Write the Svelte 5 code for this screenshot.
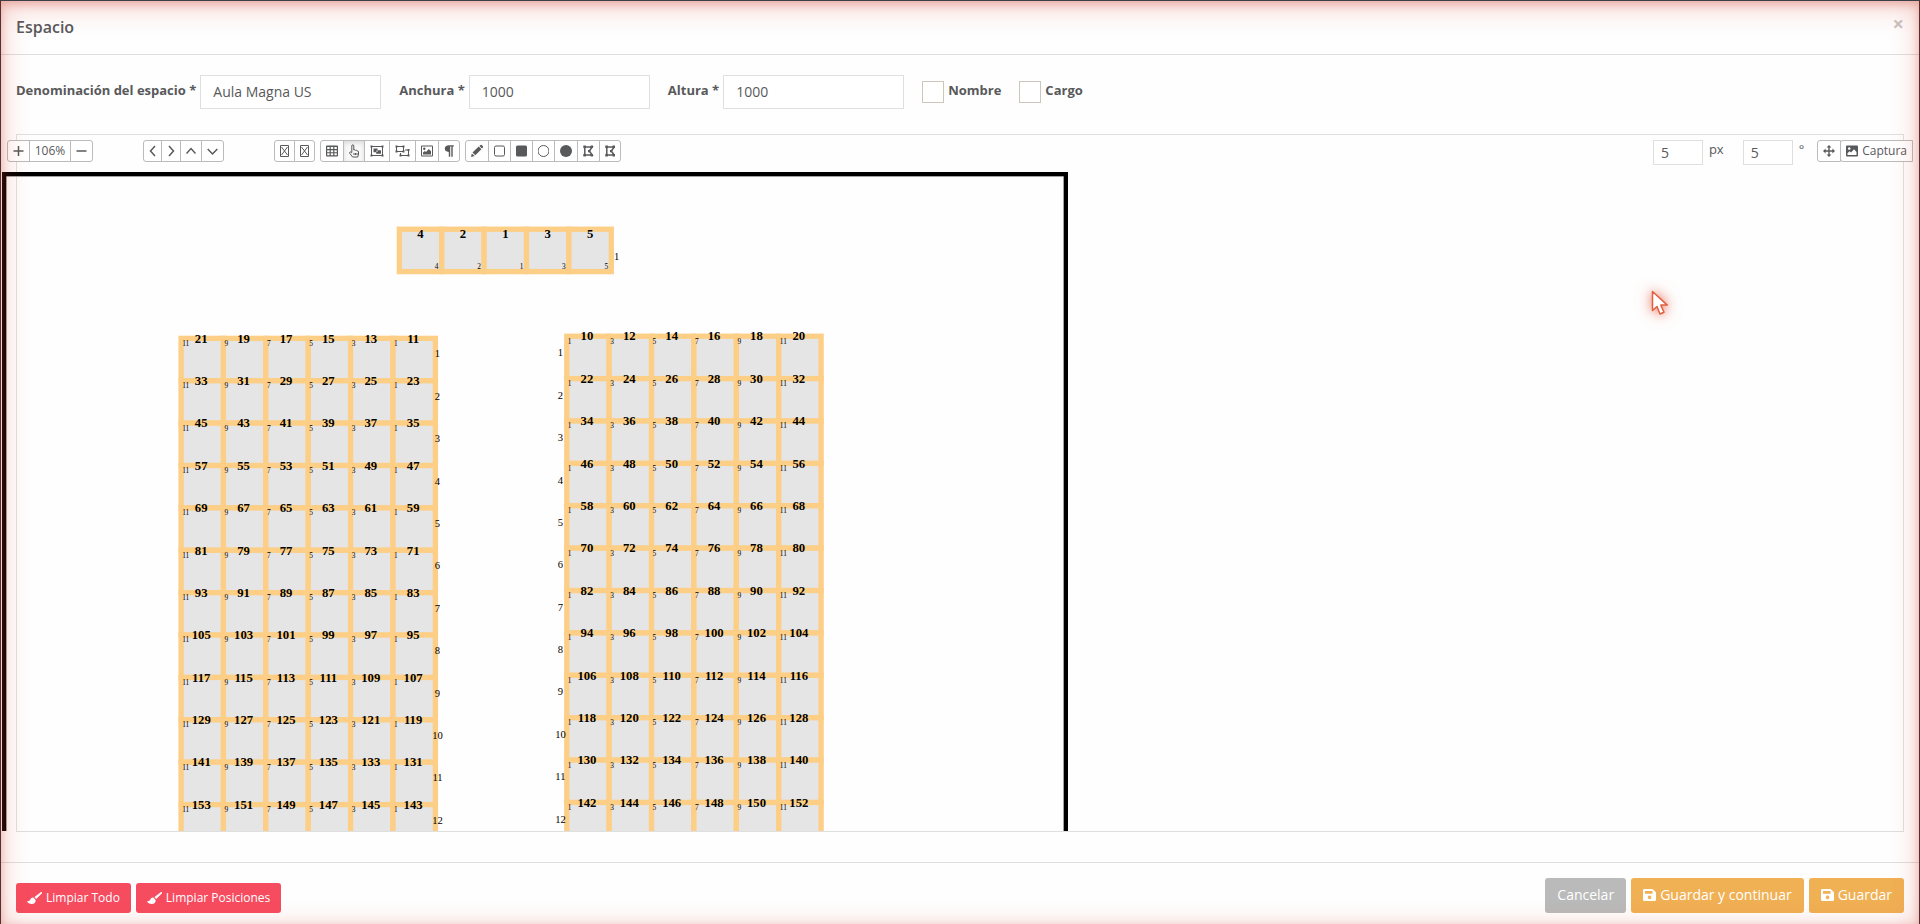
<script lang="ts">
  type Icon = { id: string; w: number; title: string };
  type Seat = { x: number; y: number; num: number; pos: number };

  let name = $state('Aula Magna US');
  let spaceWidth = $state(1000);
  let spaceHeight = $state(1000);
  let showName = $state(false);
  let showRole = $state(false);
  let stepPx = $state(5);
  let stepDeg = $state(5);
  let zoom = $state(106);
  let activeTool = $state('hand');

  const arrows: Icon[] = [
    { id: 'left', w: 7, title: 'Izquierda' },
    { id: 'right', w: 8, title: 'Derecha' },
    { id: 'up', w: 10, title: 'Arriba' },
    { id: 'down', w: 11, title: 'Abajo' },
  ];

  const missing: Icon[] = [
    { id: 'box1', w: 9, title: 'Deshacer' },
    { id: 'box2', w: 9, title: 'Rehacer' },
  ];

  const tools: Icon[] = [
    { id: 'table', w: 12, title: 'Tabla' },
    { id: 'hand', w: 10, title: 'Seleccionar' },
    { id: 'group', w: 14, title: 'Agrupar' },
    { id: 'ungroup', w: 15, title: 'Desagrupar' },
    { id: 'image', w: 12, title: 'Imagen' },
    { id: 'paragraph', w: 10, title: 'Texto' },
  ];

  const shapes: Icon[] = [
    { id: 'pencil', w: 12, title: 'Lápiz' },
    { id: 'square', w: 11, title: 'Rectángulo' },
    { id: 'squareFill', w: 11, title: 'Rectángulo relleno' },
    { id: 'circle', w: 11, title: 'Círculo' },
    { id: 'circleFill', w: 12, title: 'Círculo relleno' },
    { id: 'poly1', w: 11, title: 'Polígono' },
    { id: 'poly2', w: 10, title: 'Polígono relleno' },
  ];

  // seats are 40 x 40 units on the plan
  const SIZE = 40;
  const ROWS = 12;

  const presidency: Seat[] = [4, 2, 1, 3, 5].map((n, i) => ({
    x: 372 + i * SIZE,
    y: 51,
    num: n,
    pos: n,
  }));

  function block(x: number, y: number, first: number, step: number, firstPos: number): Seat[] {
    const seats: Seat[] = [];
    for (let r = 0; r < ROWS; r++) {
      for (let c = 0; c < 6; c++) {
        seats.push({
          x: x + c * SIZE,
          y: y + r * SIZE,
          num: first + c * step + r * 12,
          pos: firstPos + c * step,
        });
      }
    }
    return seats;
  }

  const leftSeats = block(166, 154, 21, -2, 11);
  const rightSeats = block(530, 152, 10, 2, 1);
  const rows = Array.from({ length: ROWS }, (_, i) => i);
</script>

{#snippet icon(id: string, w: number)}
  <svg class="icon" width={w} height="14" viewBox="0 0 {w} 14" aria-hidden="true">
    {#if id === 'plus'}
      <path class="line" d="M5.500 2v10M.5 7h10" />
    {:else if id === 'minus'}
      <path class="line" d="M.5 7h10" />
    {:else if id === 'left'}
      <path class="line" d="M6 2 1.500 7 6 12" />
    {:else if id === 'right'}
      <path class="line" d="M2 2l4.500 5L2 12" />
    {:else if id === 'up'}
      <path class="line" d="M.5 9.500 5 4.500l4.500 5" />
    {:else if id === 'down'}
      <path class="line" d="M.7 5l4.800 5 4.800-5" />
    {:else if id === 'box1' || id === 'box2'}
      <path class="thin" d="M.5 1.500h8v11h-8zM1.500 3l6 8M7.500 3l-6 8" />
    {:else if id === 'table'}
      <path fill-rule="evenodd" d="M1 1.500h10q1 0 1 1v9q0 1-1 1H1q-1 0-1-1v-9q0-1 1-1zM1.200 3v2h2.400V3zm3.600 0v2h2.400V3zm3.600 0v2h2.400V3zM1.200 6.200v2h2.400v-2zm3.600 0v2h2.400v-2zm3.600 0v2h2.400v-2zM1.200 9.300v2h2.400v-2zm3.600 0v2h2.400v-2zm3.600 0v2h2.400v-2z" />
    {:else if id === 'hand'}
      <path class="thin" d="M2.800 8.500V2q0-1.200 1-1.200T4.800 2v4q1.500-.8 1.800.4 1.500-.5 1.600.6 1.300-.2 1.300 1v2l-.7 3H3.600L.8 9.400Q.2 8.200 1.200 7.900q.8 0 1.600 1M5 9v2M6.500 9v2M8 9v2" />
    {:else if id === 'group'}
      <path class="thin" d="M1.500 2.500h11v9h-11z" />
      <path d="M.5 1.500h2v2h-2zM11.500 1.500h2v2h-2zM.5 10.500h2v2h-2zM11.500 10.500h2v2h-2zM3.500 4.500h4v1.700H11v3.600H6.200V8.200H3.500z" />
      <path d="M6.400 6.500h1.200v1.300H6.400z" fill="#fff" />
    {:else if id === 'ungroup'}
      <path class="thin" d="M1.500 2.500h7v5h-7zM10 6h3.500v5.500h-8V9" />
      <path d="M.5 1.500h2v2h-2zM7.500 1.500h2v2h-2zM.5 6.500h2v2h-2zM7.500 6.500h2v2h-2zM12.500 5h2v2h-2zM4.500 10.500h2v2h-2zM12.500 10.500h2v2h-2z" />
    {:else if id === 'image'}
      <path fill-rule="evenodd" d="M1 1.500h10q1 0 1 1v9q0 1-1 1H1q-1 0-1-1v-9q0-1 1-1zM1 2.600v8.800h10V2.600z" />
      <circle cx="3.300" cy="4.800" r="1.200" />
      <path d="M2 10.500v-2L3.800 7l1.200 1 2.800-3L10 7.300v3.200z" />
    {:else if id === 'paragraph'}
      <path d="M9.800 1.200v1.300H8.700v10.300H7.300V2.500H6.200v10.300H4.800V8Q.8 7.800.8 4.600T5 1.200z" />
    {:else if id === 'pencil'}
      <path d="M0 13l.8-3.600L3.700 12zM1.500 8.600l6.200-6 2.700 2.600-6.100 6zM8.400 2l1.200-1q.7-.4 1.300.2l.9.9q.6.6.1 1.300l-.9 1z" />
    {:else if id === 'square'}
      <rect class="thin" x=".5" y="2" width="10" height="10" rx="1.500" />
    {:else if id === 'squareFill'}
      <rect y="1.500" width="11" height="11" rx="1.500" />
    {:else if id === 'circle'}
      <circle class="thin" cx="5.500" cy="7" r="5.500" />
    {:else if id === 'circleFill'}
      <circle cx="6" cy="7" r="6" />
    {:else if id === 'poly1' || id === 'poly2'}
      <path class="line" d="M1.800 3h7.400L6.300 7l2.900 4H1.800z" />
      <path d="M.3 1.500h2.600v2.600H.3zM7.600 1.500h2.400v2.400H7.600zM.3 10h2.600v2.600H.3zM7.600 10h2.400v2.600H7.600zM5 5.900h2.300v2.300H5z" />
    {:else if id === 'move'}
      <path d="M6 1l2.400 2.600H6.700v2.700h2.700V4.600L12 7 9.400 9.400V7.700H6.700v2.700h1.700L6 13l-2.400-2.600h1.700V7.700H2.600v1.700L0 7l2.600-2.400v1.700h2.700V3.600H3.600z" />
    {:else if id === 'photo'}
      <path fill-rule="evenodd" d="M1 1.500h10q1 0 1 1v9q0 1-1 1H1q-1 0-1-1v-9q0-1 1-1zM3.200 3.200a1.300 1.300 0 1 0 .1 0zM1.500 11h9V8L8 5.200 5 8.500 3.500 7.300l-2 2z" />
    {:else if id === 'brush'}
      <path d="M15 1.300q-.5-.5-1.300 0L7.500 6l1.700 1.900L15 2.200q.3-.5 0-.9zM6.600 6.600q-2.600-.3-3.300 2Q2.800 10.600 0 10.300 1.200 13 4.700 13q4 0 4-3.700z" />
    {:else if id === 'save'}
      <path fill-rule="evenodd" d="M1.200 1h8.300L13 4.200v7.600q0 1.200-1.200 1.200H1.200Q0 13 0 11.800V2.200Q0 1 1.200 1zM2 3v2.800h7.500V3zM6.500 7.600a1.800 1.800 0 1 0 .1 0z" />
    {/if}
  </svg>
{/snippet}

{#snippet seatBox(s: Seat)}
  <rect class="seat" x={s.x} y={s.y} width={SIZE} height={SIZE} />
{/snippet}

<div class="modal">
  <header class="modal-header">
    <h4>Espacio</h4>
    <button class="close" type="button" aria-label="Cerrar">×</button>
  </header>

  <main class="modal-body">
    <form class="fields">
      <div class="field">
        <label for="name">Denominación del espacio *</label>
        <input id="name" type="text" bind:value={name} />
      </div>
      <div class="field">
        <label for="width">Anchura *</label>
        <input id="width" type="text" bind:value={spaceWidth} />
      </div>
      <div class="field">
        <label for="height">Altura *</label>
        <input id="height" type="text" bind:value={spaceHeight} />
      </div>
      <div class="field">
        <input id="show-name" type="checkbox" bind:checked={showName} />
        <label for="show-name">Nombre</label>
      </div>
      <div class="field">
        <input id="show-role" type="checkbox" bind:checked={showRole} />
        <label for="show-role">Cargo</label>
      </div>
    </form>

    <section class="editor">
      <div class="toolbar">
        <div class="btn-group zoom">
          <button type="button" aria-label="Acercar" onclick={() => zoom++}>{@render icon('plus', 11)}</button>
          <button type="button" class="level" onclick={() => (zoom = 100)}>{zoom}%</button>
          <button type="button" aria-label="Alejar" onclick={() => zoom--}>{@render icon('minus', 11)}</button>
        </div>
        <div class="btn-group arrows">
          {#each arrows as b (b.id)}
            <button type="button" title={b.title} aria-label={b.title}>{@render icon(b.id, b.w)}</button>
          {/each}
        </div>
        <div class="btn-group">
          {#each missing as b (b.id)}
            <button type="button" title={b.title} aria-label={b.title}>{@render icon(b.id, b.w)}</button>
          {/each}
        </div>
        {#each [tools, shapes] as group}
          <div class="btn-group">
            {#each group as b (b.id)}
              <button
                type="button"
                title={b.title}
                aria-label={b.title}
                class:active={activeTool === b.id}
                onclick={() => (activeTool = b.id)}
              >{@render icon(b.id, b.w)}</button>
            {/each}
          </div>
        {/each}

        <div class="steps">
          <div class="step">
            <input id="step-px" type="text" bind:value={stepPx} />
            <label for="step-px">px</label>
          </div>
          <div class="step">
            <input id="step-deg" type="text" bind:value={stepDeg} />
            <label for="step-deg">°</label>
          </div>
          <div class="btn-group capture">
            <button type="button" aria-label="Mover">{@render icon('move', 12)}</button>
            <button type="button">{@render icon('photo', 12)} Captura</button>
          </div>
        </div>
      </div>

      <div class="viewport">
        <svg
          class="plan"
          viewBox="-3 -3 {spaceWidth + 6} {spaceHeight + 6}"
          style="width: {Math.round(((spaceWidth + 6) * zoom) / 100)}px"
        >
          <rect class="frame-inner" x="1" y="1" width={spaceWidth - 2} height={spaceHeight - 2} />
          <rect class="frame" x="-1" y="-1" width={spaceWidth + 2} height={spaceHeight + 2} />

          {#each presidency as s}
            {@render seatBox(s)}
          {/each}
          {#each presidency as s}
            <text class="num" x={s.x + 20} y={s.y + 8}>{s.num}</text>
            <text class="pos end" x={s.x + 37} y={s.y + 38}>{s.pos}</text>
          {/each}
          <text class="row" x="577" y="80">1</text>

          {#each [...leftSeats, ...rightSeats] as s}
            {@render seatBox(s)}
          {/each}
          {#each [...leftSeats, ...rightSeats] as s}
            <text class="num" x={s.x + 19} y={s.y + 4}>{s.num}</text>
            <text class="pos" x={s.x + 1} y={s.y + 7}>{s.pos}</text>
          {/each}
          {#each rows as r}
            <text class="row" x="408" y={172 + r * SIZE}>{r + 1}</text>
            <text class="row" x="524" y={171 + r * SIZE}>{r + 1}</text>
          {/each}
        </svg>
      </div>
    </section>
  </main>

  <footer class="modal-footer">
    <div class="actions">
      <button type="button" class="btn btn-sm danger">{@render icon('brush', 15)} Limpiar Todo</button>
      <button type="button" class="btn btn-sm danger">{@render icon('brush', 15)} Limpiar Posiciones</button>
    </div>
    <div class="actions">
      <button type="button" class="btn muted">Cancelar</button>
      <button type="button" class="btn warning">{@render icon('save', 13)} Guardar y continuar</button>
      <button type="button" class="btn warning">{@render icon('save', 13)} Guardar</button>
    </div>
  </footer>

  <div class="glow"></div>
  <svg class="cursor" width="18" height="26" viewBox="0 0 18 26" aria-hidden="true">
    <path d="M1.500 1.500v19l4.500-4 3 7.500 4-1.700-3.200-7.200h6.500z" />
  </svg>
</div>

<style>
  :global(body) {
    margin: 0;
    background: #fff;
  }
  .modal {
    position: relative;
    display: flex;
    flex-direction: column;
    box-sizing: border-box;
    height: 100vh;
    overflow: hidden;
    border: 1px solid #55302e;
    border-top-color: #3b3f46;
    border-bottom: 0;
    font-family: "Open Sans", "Noto Sans", sans-serif;
    font-size: 13px;
    color: #58595b;
    background: #fefefe;
  }
  button,
  input {
    font-family: inherit;
    color: inherit;
    margin: 0;
  }
  .icon {
    display: block;
    flex: none;
    fill: currentColor;
  }
  .icon .line,
  .icon .thin {
    fill: none;
    stroke: currentColor;
    stroke-width: 1.5;
  }
  .icon .thin {
    stroke-width: 1;
  }

  .modal-header {
    display: flex;
    align-items: center;
    justify-content: space-between;
    box-sizing: border-box;
    height: 54px;
    padding: 0 15px 2px;
    border-bottom: 1px solid #dedede;
  }
  h4 {
    margin: 0;
    font-size: 16px;
    font-weight: 600;
  }
  .close {
    padding: 0 0 5px;
    border: 0;
    background: none;
    font-size: 20px;
    line-height: 20px;
    font-weight: 700;
    color: #c9c5c4;
  }

  .modal-body {
    display: flex;
    flex: 1;
    flex-direction: column;
    min-height: 0;
    padding: 20px 15px 30px;
  }
  .fields {
    display: flex;
    gap: 18px;
    margin-bottom: 25px;
  }
  .field {
    display: flex;
    align-items: center;
    gap: 4px;
  }
  .field label {
    font-weight: 700;
    line-height: 18px;
    padding-bottom: 4px;
  }
  .field input[type="text"] {
    box-sizing: border-box;
    width: 181px;
    height: 34px;
    padding: 0 12px 2px;
    border: 1px solid #dfdfdf;
    background: #fff;
    font-size: 14px;
  }
  .field input[type="checkbox"] {
    appearance: none;
    width: 22px;
    height: 22px;
    border: 1px solid #cdc6bd;
    background: #fff;
    box-sizing: border-box;
  }
  .field input[type="checkbox"]:checked {
    background: #58595b;
  }

  .editor {
    display: flex;
    flex: 1;
    flex-direction: column;
    min-height: 0;
    border: 1px solid #dfdfdf;
  }
  .toolbar {
    display: flex;
    align-items: flex-start;
    gap: 5px;
    height: 32px;
    margin: 0 -10px;
    padding-top: 5px;
  }
  .btn-group {
    display: flex;
  }
  .btn-group button {
    display: flex;
    align-items: center;
    justify-content: center;
    gap: 4px;
    box-sizing: border-box;
    height: 22px;
    padding: 0 5px;
    border: 1px solid #bbb;
    background: #fff;
    font-size: 12px;
    line-height: 18px;
  }
  .btn-group button + button {
    margin-left: -1px;
  }
  .btn-group button:first-child {
    border-radius: 3px 0 0 3px;
  }
  .btn-group button:last-child {
    border-radius: 0 3px 3px 0;
  }
  .btn-group button.active {
    background: #f8f8f8;
    box-shadow: inset 0 2px 4px rgba(0, 0, 0, 0.12);
  }
  .btn-group .level {
    width: 42px;
  }
  .zoom,
  .arrows {
    margin-right: 45px;
  }
  .steps {
    display: flex;
    align-items: flex-start;
    margin-left: auto;
  }
  .step {
    display: flex;
    gap: 6px;
    margin-right: 19px;
  }
  .step:nth-child(2) {
    margin-right: 13px;
  }
  .step input {
    box-sizing: border-box;
    width: 50px;
    height: 25px;
    padding: 0 7px;
    border: 1px solid #dfdfdf;
    background: #fff;
    font-size: 14px;
  }
  .step label {
    line-height: 18px;
  }
  .capture button:last-child {
    border-radius: 3px 0 0 3px;
  }

  .viewport {
    flex: 1;
    min-height: 0;
    margin-left: -15px;
    overflow: hidden;
  }
  .plan {
    display: block;
    font-family: "Liberation Serif", "Times New Roman", serif;
  }
  .frame {
    fill: none;
    stroke: #000;
    stroke-width: 4;
  }
  .frame-inner {
    fill: none;
    stroke: #ccc;
    stroke-width: 1;
  }
  .seat {
    fill: #e5e5e5;
    stroke: #fdce85;
    stroke-width: 5;
  }
  .num {
    font-size: 12px;
    font-weight: 700;
    text-anchor: middle;
    fill: #000;
  }
  .pos {
    font-size: 7px;
    fill: #000;
  }
  .pos.end {
    text-anchor: end;
  }
  .row {
    font-size: 10px;
    text-anchor: middle;
    fill: #000;
  }

  .modal-footer {
    display: flex;
    align-items: flex-end;
    justify-content: space-between;
    padding: 15px 15px 11px;
    border-top: 1px solid #dedede;
  }
  .actions {
    display: flex;
    align-items: flex-end;
    gap: 5px;
  }
  .btn {
    display: flex;
    align-items: center;
    gap: 4px;
    height: 35px;
    padding: 0 12px 1px;
    border: 0;
    border-radius: 3px;
    font-size: 14px;
    line-height: 20px;
    color: #fff;
  }
  .btn-sm {
    height: 30px;
    padding: 0 11px;
    font-size: 12px;
  }
  .danger {
    background: #f64c5f;
  }
  .muted {
    background: #bababa;
  }
  .warning {
    background: #f0b054;
  }

  /* red vignette round the dialog */
  .glow {
    position: absolute;
    inset: 0;
    pointer-events: none;
    box-shadow:
      inset 0 5px 28px rgba(222, 70, 45, 0.3),
      inset 0 3px 8px rgba(190, 50, 45, 0.28);
  }
  .cursor {
    position: absolute;
    left: 1650px;
    top: 289px;
    overflow: visible;
    pointer-events: none;
    filter: drop-shadow(0 0 4px rgba(230, 70, 40, 0.5)) drop-shadow(0 0 8px rgba(230, 70, 40, 0.4));
  }
  .cursor path {
    fill: #fff;
    stroke: #e0603f;
    stroke-width: 1.5;
    stroke-linejoin: round;
  }
</style>
